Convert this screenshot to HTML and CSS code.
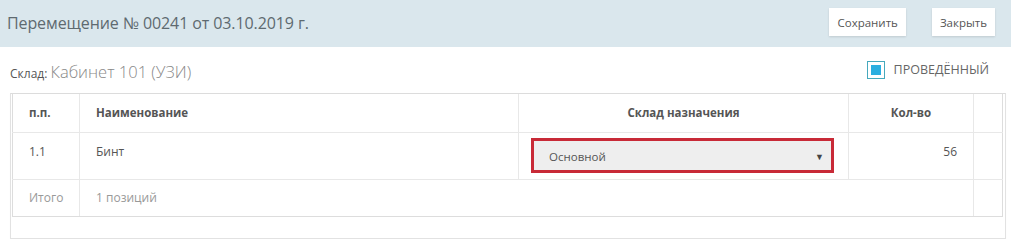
FILE: index.html
```html
<!DOCTYPE html>
<html lang="ru">
<head>
    <meta charset="UTF-8">
    <title>Перемещение</title>
    <link rel="stylesheet" href="styles.css">
</head>
<body>
    <div class="topbar">
        <h1 class="title">Перемещение № 00241 от 03.10.2019 г.</h1>
        <div class="actions">
            <button class="btn">Сохранить</button>
            <button class="btn">Закрыть</button>
        </div>
    </div>

    <div class="info">
        <div class="store"><span class="store-label">Склад:</span> <span class="store-name">Кабинет 101 (УЗИ)</span></div>
        <label class="done">
            <span class="check"><span class="check-fill"></span></span>
            ПРОВЕДЁННЫЙ
        </label>
    </div>

    <div class="panel">
        <table class="grid">
            <colgroup>
                <col class="c-num">
                <col class="c-name">
                <col class="c-store">
                <col class="c-qty">
                <col class="c-act">
            </colgroup>
            <thead>
                <tr>
                    <th>п.п.</th>
                    <th>Наименование</th>
                    <th class="center">Склад назначения</th>
                    <th class="center">Кол-во</th>
                    <th></th>
                </tr>
            </thead>
            <tbody>
                <tr class="item">
                    <td>1.1</td>
                    <td>Бинт</td>
                    <td class="sel-cell">
                        <div class="select">
                            <span>Основной</span>
                            <span class="arrow">▼</span>
                        </div>
                    </td>
                    <td class="right">56</td>
                    <td></td>
                </tr>
            </tbody>
            <tfoot>
                <tr>
                    <td>Итого</td>
                    <td colspan="3">1 позиций</td>
                    <td></td>
                </tr>
            </tfoot>
        </table>
    </div>
</body>
</html>
```

FILE: styles.css
```css
* {
    box-sizing: border-box;
    margin: 0;
    padding: 0;
}

body {
    font-family: 'Open Sans', sans-serif;
    font-size: 12px;
    color: #555;
    background: #fff;
    width: 1011px;
}

.topbar {
    height: 47px;
    background-color: #dae7ed;
    display: flex;
    align-items: center;
    justify-content: space-between;
    padding: 0 16px 0 7px;
}

.title {
    font-size: 16px;
    font-weight: normal;
    color: #5e6a70;
    letter-spacing: -0.1px;
    margin-top: -1px;
}

.actions {
    display: flex;
    gap: 26px;
    margin-top: -3px;
}

.btn {
    height: 28px;
    padding: 0 8px;
    background: #fff;
    border: none;
    font-family: inherit;
    font-size: 11.5px;
    color: #555;
    box-shadow: 0 1px 2px rgba(0, 0, 0, 0.12);
}

.info {
    display: flex;
    justify-content: space-between;
    align-items: center;
    height: 46px;
    padding: 2px 22px 0 10px;
}

.store-label {
    font-size: 12px;
    color: #555;
}

.store-name {
    font-size: 16.5px;
    font-weight: 300;
    color: #888;
}

.done {
    display: flex;
    align-items: center;
    gap: 9px;
    font-size: 12.5px;
    color: #666;
    margin-top: -3px;
}

.check {
    width: 18px;
    height: 18px;
    border: 1px solid #46a9bd;
    padding: 3px;
}

.check-fill {
    display: block;
    width: 100%;
    height: 100%;
    background: #2aaee0;
}

.panel {
    margin: 0 5px 0 10px;
    border: 1px solid #e2e2e2;
    border-top-color: #dcdcdc;
    padding: 0 2px 21px 1px;
    box-shadow: 0 1px 1px rgba(0, 0, 0, 0.04);
}

.grid {
    width: 100%;
    border-collapse: collapse;
    table-layout: fixed;
    border-left: 1px solid #dddddd;
    border-right: 1px solid #dddddd;
}

.c-num { width: 67px; }
.c-name { width: 439px; }
.c-store { width: 330px; }
.c-qty { width: 125px; }

.grid th,
.grid td {
    border-left: 1px solid #e8e8e8;
    text-align: left;
    vertical-align: middle;
    padding: 0 16px;
}

.grid th:first-child,
.grid td:first-child {
    border-left: none;
}

.grid th {
    height: 38px;
    font-size: 11.5px;
    font-weight: bold;
    color: #555;
    border-bottom: 1px solid #e8e8e8;
}

.grid th.center {
    text-align: center;
}

.grid .item td {
    height: 47px;
    vertical-align: top;
    padding-top: 10px;
    border-bottom: 1px solid #e8e8e8;
}

.grid td.right {
    text-align: right;
}

.grid .item td.sel-cell {
    padding: 5px 14px 0 12px;
}

.select {
    height: 35px;
    border: 3px solid #c82a37;
    background: #eeeeee;
    display: flex;
    align-items: center;
    justify-content: space-between;
    padding: 2px 7px 0 15px;
    font-size: 11.5px;
    color: #555;
}

.arrow {
    font-size: 9px;
    color: #444;
}

.grid tfoot td {
    height: 37px;
    color: #999;
    border-bottom: 1px solid #dddddd;
}

.grid tfoot td:first-child {
    padding-left: 16px;
}
```
